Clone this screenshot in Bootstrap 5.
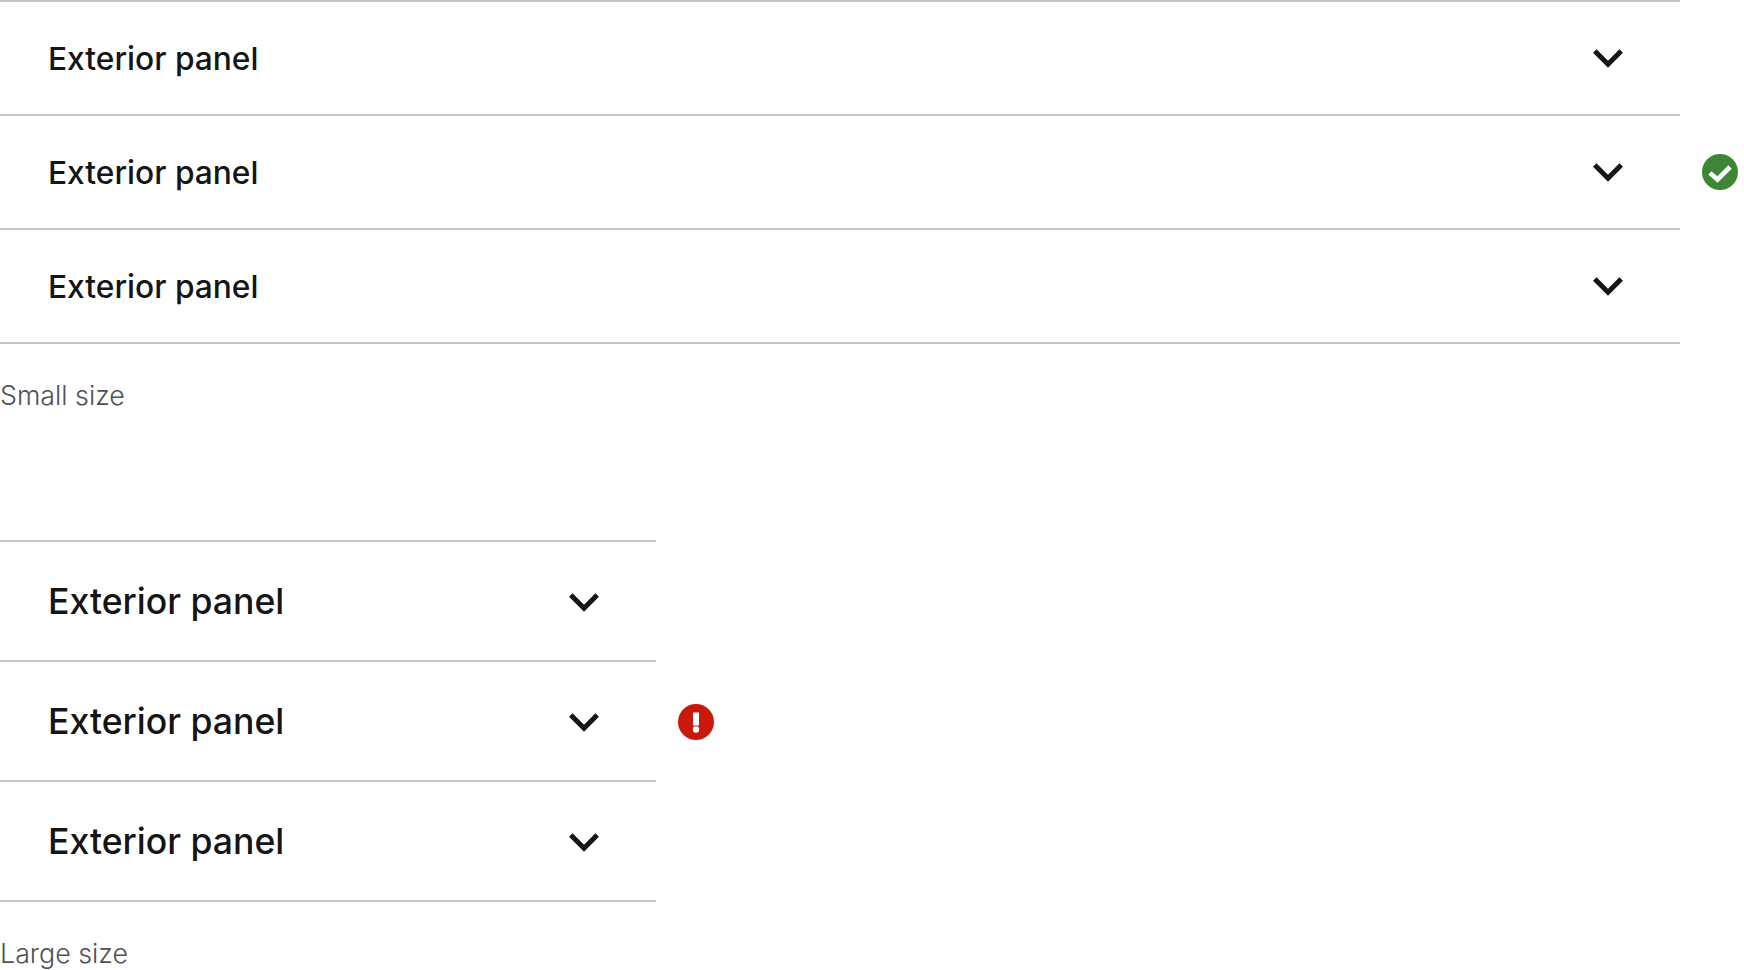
<!DOCTYPE html>
<html lang="en">
<head>
  <meta charset="UTF-8" />
  <title>Accordion sizes</title>
  <link href="https://cdn.jsdelivr.net/npm/bootstrap@5.3.2/dist/css/bootstrap.min.css" rel="stylesheet" />
  <style>
    body {
      font-family: "Inter", "Liberation Sans", sans-serif;
      background-color: #fff;
      overflow: hidden;
    }

    .size-group {
      gap: 22px;
    }

    .size-group .accordion {
      border-top: 2px solid #c7c7c7;
    }

    .group-sm .accordion { width: 1680px; }
    .group-lg .accordion { width: 656px; }

    .size-group .accordion-item {
      border: 0;
      border-bottom: 2px solid #c7c7c7;
      border-radius: 0;
    }

    .size-group .accordion-button {
      padding: 2px 56px 0 48px;
      color: #151515;
      font-weight: 500;
      background: #fff;
      box-shadow: none;
      border-radius: 0 !important;
    }

    .size-group .accordion-button::after {
      display: none;
    }

    .group-sm .accordion-button {
      height: 112px;
      font-size: 31.700px;
    }

    .group-lg .accordion-button {
      height: 118px;
      font-size: 35.600px;
    }

    .chevron {
      width: 32px;
      height: 20px;
      flex-shrink: 0;
    }

    .group-sm .chevron { margin-top: -2px; }

    .status-icon {
      width: 36px;
      height: 36px;
      flex-shrink: 0;
    }

    .group-lg .status-icon { margin-top: 2px; }

    .size-caption {
      margin: 0;
      color: #4f5255;
      font-size: 26.800px;
      font-weight: 300;
      line-height: 40px;
    }

    .caption-sm { padding-top: 31px; padding-bottom: 125px; }
    .caption-lg { padding-top: 31px; }
  </style>
</head>
<body>

  <!-- Small size -->
  <div class="size-group group-sm d-flex align-items-center">
    <div class="accordion">
      <div class="accordion-item">
        <h2 class="accordion-header">
          <button class="accordion-button collapsed d-flex justify-content-between" type="button">
            Exterior panel
            <svg class="chevron" viewBox="0 0 32 20"><path d="M2.800 3 16 16.200 29.200 3" fill="none" stroke="#151515" stroke-width="5"/></svg>
          </button>
        </h2>
      </div>
      <div class="accordion-item">
        <h2 class="accordion-header">
          <button class="accordion-button collapsed d-flex justify-content-between" type="button">
            Exterior panel
            <svg class="chevron" viewBox="0 0 32 20"><path d="M2.800 3 16 16.200 29.200 3" fill="none" stroke="#151515" stroke-width="5"/></svg>
          </button>
        </h2>
      </div>
      <div class="accordion-item">
        <h2 class="accordion-header">
          <button class="accordion-button collapsed d-flex justify-content-between" type="button">
            Exterior panel
            <svg class="chevron" viewBox="0 0 32 20"><path d="M2.800 3 16 16.200 29.200 3" fill="none" stroke="#151515" stroke-width="5"/></svg>
          </button>
        </h2>
      </div>
    </div>
    <svg class="status-icon" viewBox="0 0 36 36">
      <circle cx="18" cy="18" r="18" fill="#3e8635"/>
      <path d="M8 19 15.500 25.500 28 13" fill="none" stroke="#fff" stroke-width="4.800"/>
    </svg>
  </div>
  <p class="size-caption caption-sm">Small size</p>

  <!-- Large size -->
  <div class="size-group group-lg d-flex align-items-center">
    <div class="accordion">
      <div class="accordion-item">
        <h2 class="accordion-header">
          <button class="accordion-button collapsed d-flex justify-content-between" type="button">
            Exterior panel
            <svg class="chevron" viewBox="0 0 32 20"><path d="M2.800 3 16 16.200 29.200 3" fill="none" stroke="#151515" stroke-width="5"/></svg>
          </button>
        </h2>
      </div>
      <div class="accordion-item">
        <h2 class="accordion-header">
          <button class="accordion-button collapsed d-flex justify-content-between" type="button">
            Exterior panel
            <svg class="chevron" viewBox="0 0 32 20"><path d="M2.800 3 16 16.200 29.200 3" fill="none" stroke="#151515" stroke-width="5"/></svg>
          </button>
        </h2>
      </div>
      <div class="accordion-item">
        <h2 class="accordion-header">
          <button class="accordion-button collapsed d-flex justify-content-between" type="button">
            Exterior panel
            <svg class="chevron" viewBox="0 0 32 20"><path d="M2.800 3 16 16.200 29.200 3" fill="none" stroke="#151515" stroke-width="5"/></svg>
          </button>
        </h2>
      </div>
    </div>
    <svg class="status-icon" viewBox="0 0 36 36">
      <circle cx="18" cy="18" r="18" fill="#c9190b"/>
      <rect x="15" y="8.500" width="6" height="13" fill="#fff"/>
      <circle cx="18" cy="25.500" r="3.200" fill="#fff"/>
    </svg>
  </div>
  <p class="size-caption caption-lg">Large size</p>

  <script src="https://cdn.jsdelivr.net/npm/bootstrap@5.3.2/dist/js/bootstrap.bundle.min.js"></script>
</body>
</html>
